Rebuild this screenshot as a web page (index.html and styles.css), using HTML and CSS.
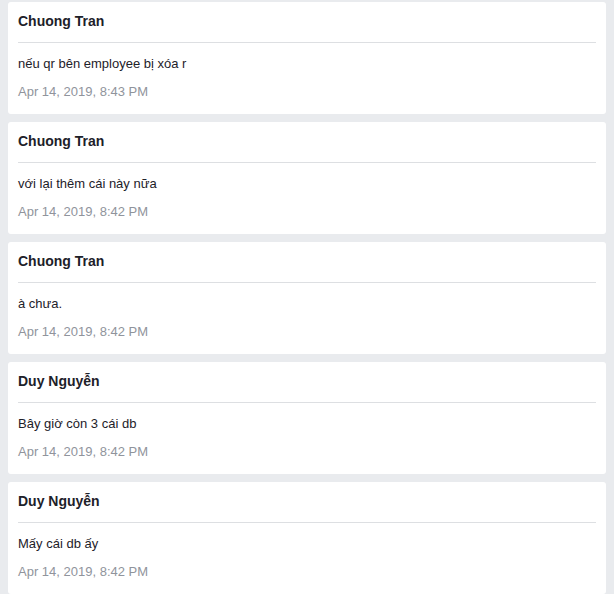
FILE: index.html
```html
<!DOCTYPE html>
<html lang="vi">
<head>
<meta charset="utf-8">
<link rel="stylesheet" href="styles.css">
</head>
<body>
<div class="list">
  <div class="card">
    <div class="name">Chuong Tran</div>
    <div class="msg">nếu qr bên employee bị xóa r</div>
    <div class="time">Apr 14, 2019, 8:43 PM</div>
  </div>
  <div class="card">
    <div class="name">Chuong Tran</div>
    <div class="msg">với lại thêm cái này nữa</div>
    <div class="time">Apr 14, 2019, 8:42 PM</div>
  </div>
  <div class="card">
    <div class="name">Chuong Tran</div>
    <div class="msg">à chưa.</div>
    <div class="time">Apr 14, 2019, 8:42 PM</div>
  </div>
  <div class="card">
    <div class="name">Duy Nguyễn</div>
    <div class="msg">Bây giờ còn 3 cái db</div>
    <div class="time">Apr 14, 2019, 8:42 PM</div>
  </div>
  <div class="card">
    <div class="name">Duy Nguyễn</div>
    <div class="msg">Mấy cái db ấy</div>
    <div class="time">Apr 14, 2019, 8:42 PM</div>
  </div>
</div>
</body>
</html>
```
FILE: styles.css
```css
html, body {
  margin: 0;
  padding: 0;
  background: #e9ebee;
  font-family: "Liberation Sans", Arial, sans-serif;
  color: #1d2129;
}
.list {
  display: flex;
  flex-direction: column;
  gap: 8px;
  padding: 2px 8px 8px 8px;
}
.card {
  background: #fff;
  border-radius: 3px;
  padding: 10px 10px 13px 10px;
}
.name {
  font-size: 14px;
  font-weight: bold;
  line-height: 18px;
  padding-bottom: 12px;
  border-bottom: 1px solid #dddfe2;
}
.msg {
  font-size: 13px;
  line-height: 18px;
  margin-top: 12px;
}
.time {
  font-size: 13px;
  line-height: 18px;
  margin-top: 10px;
  color: #90949c;
}
```
